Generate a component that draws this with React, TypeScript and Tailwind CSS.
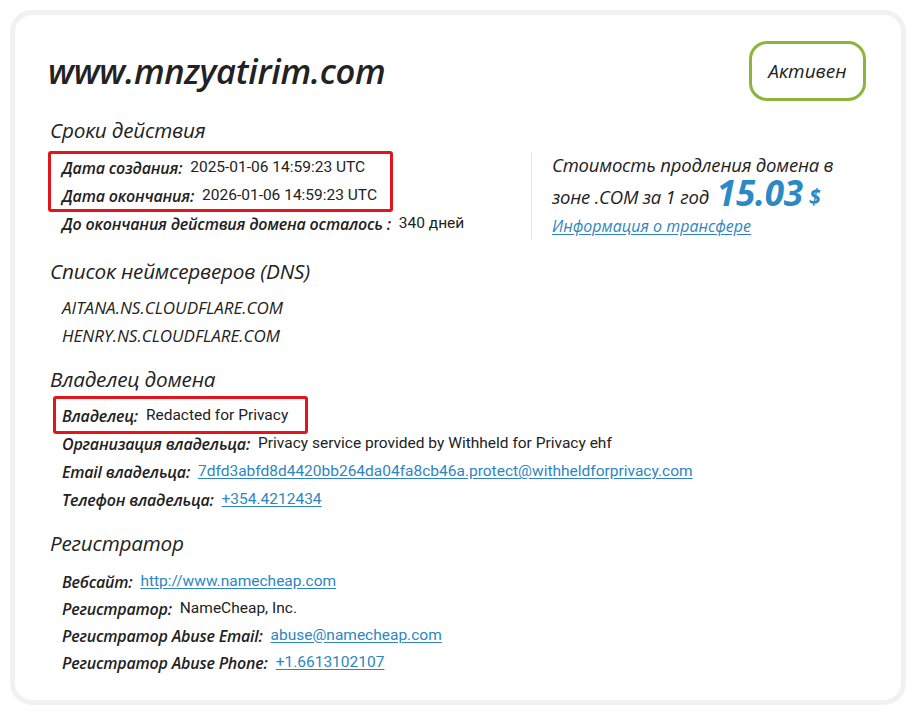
import React from "react";

const Label = ({ children }: { children: React.ReactNode }) => (
  <span className="italic font-semibold text-[16px] text-[#222] [font-family:'Open_Sans',sans-serif] tracking-[-0.2px]">{children}</span>
);

const Val = ({ children }: { children: React.ReactNode }) => (
  <span className="ml-[8px] text-[15.5px] text-[#222] [font-family:Roboto,sans-serif]">{children}</span>
);

const Lnk = ({ children }: { children: React.ReactNode }) => (
  <a className="ml-[8px] text-[15.5px] text-[#2d86c2] underline underline-offset-2 [font-family:Roboto,sans-serif]">{children}</a>
);

const Row = ({ h = "h-[28px]", children }: { h?: string; children: React.ReactNode }) => (
  <div className={`${h} flex items-center pl-[14px] whitespace-nowrap`}>{children}</div>
);

const Heading = ({ children }: { children: React.ReactNode }) => (
  <div className="h-[28px] flex items-center pl-[2px] text-[20.7px] italic text-[#222] [font-family:'Open_Sans',sans-serif] tracking-[-0.2px]">
    {children}
  </div>
);

export default function App() {
  return (
    <div className="w-[916px] h-[715px] bg-white p-[10px] relative">
      <div className="w-[896px] h-[695px] rounded-[22px] border-[5px] border-[#f1f1f1] bg-white pt-[26px] pl-[33px] pr-[34px] flex flex-col">
        <div className="flex items-center justify-between h-[60px]">
          <div className="text-[34.5px] italic font-semibold text-[#222] [font-family:'Open_Sans',sans-serif] tracking-[-0.3px] leading-none">
            www.mnzyatirim.com
          </div>
          <div className="h-[60px] w-[117px] mr-[1px] rounded-[18px] border-[3px] border-[#8db43b] flex items-center justify-center text-[19px] italic font-medium text-[#222] [font-family:'Open_Sans',sans-serif]">
            Активен
          </div>
        </div>

        <div className="mt-[16px]">
          <Heading>Сроки действия</Heading>
        </div>
        <div className="flex">
          <div className="w-[483px] mt-[9px] relative">
            <Row><Label>Дата создания:</Label><Val>2025-01-06 14:59:23 UTC</Val></Row>
            <Row><Label>Дата окончания:</Label><Val>2026-01-06 14:59:23 UTC</Val></Row>
            <Row><Label>До окончания действия домена осталось :</Label><Val>340 дней</Val></Row>
            <div className="absolute left-0 top-[-3px] w-[345px] h-[61px] border-[3px] border-[#e3141b] rounded-[3px]"></div>
          </div>
          <div className="mt-[7px] border-l border-[#e6e6e6] pl-[20px] h-[88px] flex flex-col">
            <div className="h-[26px] flex items-center text-[18.5px] italic font-medium text-[#222] [font-family:'Open_Sans',sans-serif] tracking-[-0.2px] whitespace-nowrap leading-none">
              Стоимость продления домена в
            </div>
            <div className="h-[32px] flex items-end text-[18.5px] italic font-medium text-[#222] [font-family:'Open_Sans',sans-serif] tracking-[-0.2px] whitespace-nowrap leading-none">
              <span className="mb-[3px]">зоне .COM за 1 год</span>
              <span className="ml-[8px] text-[35px] leading-none font-bold text-[#2b8ac6]">15.03</span>
              <span className="ml-[6px] mb-[3px] text-[21px] font-bold text-[#2b8ac6]">$</span>
            </div>
            <div className="h-[28px] flex items-center mt-[3px] text-[16px] italic font-medium text-[#2d86c2] underline underline-offset-2 [font-family:'Open_Sans',sans-serif] whitespace-nowrap">
              Информация о трансфере
            </div>
          </div>
        </div>

        <div className="mt-[18px]">
          <Heading>Список неймсерверов (DNS)</Heading>
        </div>
        <div className="mt-[8px]">
          <Row><span className="italic text-[17px] text-[#222] [font-family:'Open_Sans',sans-serif]">AITANA.NS.CLOUDFLARE.COM</span></Row>
          <Row><span className="italic text-[17px] text-[#222] [font-family:'Open_Sans',sans-serif]">HENRY.NS.CLOUDFLARE.COM</span></Row>
        </div>

        <div className="mt-[16px]">
          <Heading>Владелец домена</Heading>
        </div>
        <div className="mt-[8px] relative">
          <Row><Label>Владелец:</Label><Val>Redacted for Privacy</Val></Row>
          <Row><Label>Организация владельца:</Label><Val>Privacy service provided by Withheld for Privacy ehf</Val></Row>
          <Row><Label>Email владельца:</Label><Lnk>7dfd3abfd8d4420bb264da04fa8cb46a.protect@withheldforprivacy.com</Lnk></Row>
          <Row><Label>Телефон владельца:</Label><Lnk>+354.4212434</Lnk></Row>
          <div className="absolute left-[5px] top-[-6px] w-[255px] h-[38px] border-[3px] border-[#e3141b] rounded-[3px]"></div>
        </div>

        <div className="mt-[16px]">
          <Heading>Регистратор</Heading>
        </div>
        <div className="mt-[10px]">
          <Row h="h-[27px]"><Label>Вебсайт:</Label><Lnk>http://www.namecheap.com</Lnk></Row>
          <Row h="h-[27px]"><Label>Регистратор:</Label><Val>NameCheap, Inc.</Val></Row>
          <Row h="h-[27px]"><Label>Регистратор Abuse Email:</Label><Lnk>abuse@namecheap.com</Lnk></Row>
          <Row h="h-[27px]"><Label>Регистратор Abuse Phone:</Label><Lnk>+1.6613102107</Lnk></Row>
        </div>
      </div>
    </div>
  );
}
